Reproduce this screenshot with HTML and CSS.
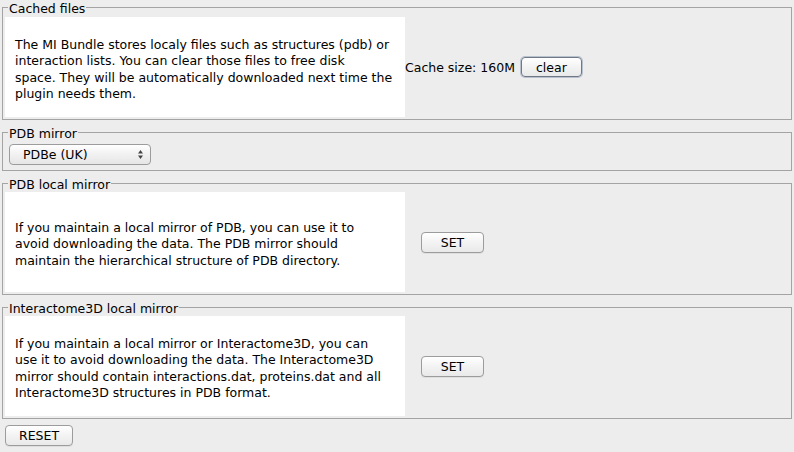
FILE: index.html
```html
<!DOCTYPE html>
<html>
<head>
<meta charset="utf-8">
<link rel="stylesheet" href="styles.css">
</head>
<body>
<div class="page">
  <fieldset class="group group-cache">
    <legend class="group-title">Cached files</legend>
    <div class="row">
      <p class="info">The MI Bundle stores localy files such as structures (pdb) or<br>interaction lists. You can clear those files to free disk<br>space. They will be automatically downloaded next time the<br>plugin needs them.</p>
      <span class="label">Cache size: 160M</span>
      <button class="btn btn-default btn-clear">clear</button>
    </div>
  </fieldset>

  <fieldset class="group group-mirror">
    <legend class="group-title">PDB mirror</legend>
    <div class="select">
      <span class="select-text">PDBe (UK)</span>
      <svg class="select-arrows" width="7" height="11" viewBox="0 0 7 11"><path d="M3.5 1 L6 4.5 H1 Z" fill="#444"/><path d="M3.5 10 L6 6.5 H1 Z" fill="#444"/></svg>
    </div>
  </fieldset>

  <fieldset class="group">
    <legend class="group-title">PDB local mirror</legend>
    <div class="row">
      <p class="info">If you maintain a local mirror of PDB, you can use it to<br>avoid downloading the data. The PDB mirror should<br>maintain the hierarchical structure of PDB directory.</p>
      <button class="btn btn-set">SET</button>
    </div>
  </fieldset>

  <fieldset class="group">
    <legend class="group-title">Interactome3D local mirror</legend>
    <div class="row">
      <p class="info">If you maintain a local mirror or Interactome3D, you can<br>use it to avoid downloading the data. The Interactome3D<br>mirror should contain interactions.dat, proteins.dat and all<br>Interactome3D structures in PDB format.</p>
      <button class="btn btn-set">SET</button>
    </div>
  </fieldset>

  <div class="footer">
    <button class="btn btn-reset">RESET</button>
  </div>
</div>
</body>
</html>
```

FILE: styles.css
```css
html, body {
  margin: 0;
  padding: 0;
  background: #ededed;
}
body {
  width: 794px;
  height: 452px;
  overflow: hidden;
  font-family: "DejaVu Sans", "Liberation Sans", sans-serif;
  font-size: 12.5px;
  color: #000;
}
.page {
  display: flex;
  flex-direction: column;
  gap: 5px;
}
.group {
  margin: 0 2px;
  padding: 2px 0 2px 2px;
  border: 1px solid #a4a4a4;
  min-width: 0;
}
.group-cache {
  padding-top: 3px;
}
.group-title {
  margin-left: 3px;
  padding: 0 1px;
  font-size: 12.5px;
  line-height: 18px;
  height: 14px;
}
.row {
  display: flex;
  align-items: center;
}
.info {
  box-sizing: border-box;
  width: 400px;
  height: 100px;
  margin: 0;
  background: #fff;
  padding: 5px 6px 0 10px;
  display: flex;
  align-items: center;
  line-height: 16.5px;
  white-space: nowrap;
  flex-shrink: 0;
}
.label {
  margin-right: 6px;
  white-space: nowrap;
}
.btn {
  font-family: "DejaVu Sans", "Liberation Sans", sans-serif;
  font-size: 12.5px;
  color: #000;
  height: 21px;
  padding: 0;
  border: 1px solid #9c9c9c;
  border-radius: 4px;
  background: linear-gradient(#ffffff, #f3f3f3 50%, #e9e9e9);
  box-shadow: 0 1px 0 rgba(0,0,0,0.06);
}
.btn-clear {
  width: 61px;
  height: 20px;
}
.btn-default {
  border-color: #6f7884;
  box-shadow: 0 0 0 1px #b8c2cf;
}
.btn-set {
  width: 63px;
  margin-left: 16px;
}
.group-mirror {
  padding-top: 5px;
  padding-bottom: 5px;
}
.select {
  box-sizing: border-box;
  width: 142px;
  height: 21px;
  margin-left: 4px;
  border: 1px solid #9c9c9c;
  border-radius: 4px;
  background: linear-gradient(#ffffff, #f1f1f1 50%, #e6e6e6);
  display: flex;
  align-items: center;
  justify-content: space-between;
  padding: 0 6px 0 13px;
}
.footer {
  padding: 1px 0 0 5px;
}
.btn-reset {
  width: 68px;
}
```
